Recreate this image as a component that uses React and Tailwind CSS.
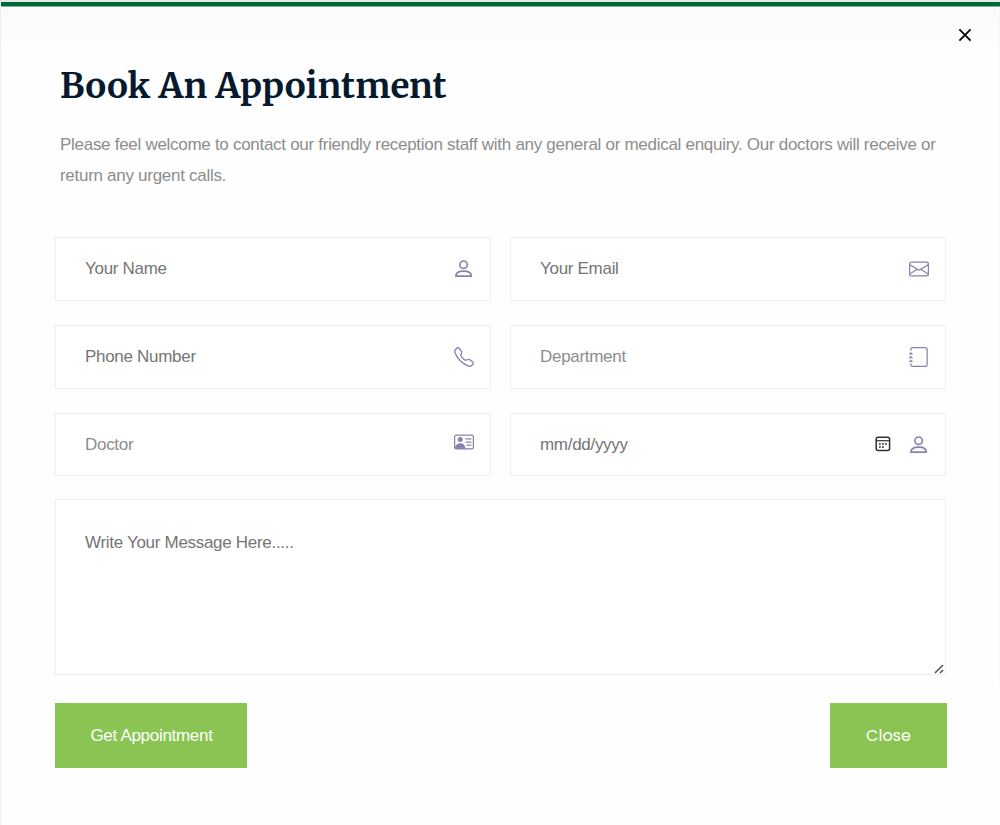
import { BsEnvelope, BsTelephone, BsJournal, BsPersonVcard } from "react-icons/bs";

const box = "border border-[#efefef] bg-white";

function Field({ label, muted, short, children }) {
  return (
    <label
      className={`flex items-center pl-[29px] pr-[16px] ${box} ${short ? "h-[63px]" : "h-[64px]"}`}
    >
      <input
        placeholder={label}
        className={`min-w-0 flex-1 bg-transparent text-[17px] tracking-[-0.3px] outline-none ${
          muted ? "placeholder:text-[#8d8d8d]" : "placeholder:text-[#757575]"
        }`}
      />
      {children}
    </label>
  );
}

function PersonIcon() {
  return (
    <svg
      className="mr-px h-[18px] w-[18px]"
      viewBox="0 0 18 18"
      fill="none"
      stroke="currentColor"
      strokeWidth="1.7"
      strokeLinejoin="round"
    >
      <circle cx="8.6" cy="4.7" r="3.7" />
      <path d="M.9 16.2C.9 12.9 4 11.1 8.6 11.1s7.7 1.8 7.7 5.1z" />
    </svg>
  );
}

function CalendarIcon() {
  return (
    <svg className="mr-[19px] mb-px h-4 w-4" viewBox="0 0 16 16" fill="none" stroke="#303030">
      <rect x="1.2" y="1.2" width="13.4" height="13.2" rx="2" strokeWidth="1.5" />
      <path d="M1.2 4.7h13.4" strokeWidth="1.2" />
      <path d="M4 8h8M4 11h5.2" strokeWidth="1.6" strokeDasharray="1.8 1.2" />
    </svg>
  );
}

export default function App() {
  return (
    <div className="relative flex h-[825px] w-[1000px] flex-col bg-[#fefefe] font-['Liberation_Sans',Arial,sans-serif]">
      <div className="h-[2px] shrink-0 bg-[#e6ebe9]" />
      <div className="ml-px h-[5px] shrink-0 border-b border-[#80b49d] bg-[#006838]" />
      <div className="absolute top-[7px] right-0 h-[678px] w-px bg-[#f6f6f6]" />
      <main className="flex flex-1 flex-col border-l border-[#efefef] bg-linear-to-b from-[#fafafa] to-[#fefefe] to-[48px] pl-[54px] pr-[53px]">
        <div className="-mr-[26px] flex h-[56px] justify-end pt-[20px]">
          <button aria-label="Dismiss" className="h-4 w-4">
            <svg viewBox="0 0 16 16" fill="none" stroke="#000" strokeWidth="1.8">
              <path d="M2.4 2.4 13.6 13.6M13.6 2.4 2.4 13.6" />
            </svg>
          </button>
        </div>
        <h1 className="mt-px ml-[5px] h-[44px] whitespace-nowrap font-['Merriweather','DejaVu_Serif_Condensed',serif] text-[35px] leading-[44px] font-bold text-[#061a2e]">
          Book An Appointment
        </h1>
        <p className="mt-[21px] ml-[5px] h-[62px] text-[17px] leading-[31px] tracking-[-0.287px] whitespace-nowrap text-[#8d8d8d]">
          Please feel welcome to contact our friendly reception staff with any general or medical enquiry. Our doctors will receive or
          <br />
          return any urgent calls.
        </p>
        <form className="mt-[46px]">
          <div className="grid grid-cols-[436px_436px] gap-x-[19px] gap-y-[24px] text-[#8585ad]">
            <Field label="Your Name">
              <PersonIcon />
            </Field>
            <Field label="Your Email">
              <BsEnvelope className="h-5 w-5" />
            </Field>
            <Field label="Phone Number">
              <BsTelephone className="h-5 w-5" />
            </Field>
            <Field label="Department" muted>
              <BsJournal className="h-5 w-5" />
            </Field>
            <Field label="Doctor" muted short>
              <BsPersonVcard className="mb-[5px] h-5 w-5" />
            </Field>
            <Field label="mm/dd/yyyy" short>
              <CalendarIcon />
              <PersonIcon />
            </Field>
          </div>
          <div className={`relative mt-[23px] h-[176px] w-[891px] ${box}`}>
            <textarea
              placeholder="Write Your Message Here....."
              className="block h-full w-full resize-none bg-transparent pt-[33px] pl-[29px] text-[17px] leading-5 tracking-[-0.3px] outline-none placeholder:text-[#757575]"
            />
            <svg
              className="absolute right-[1px] bottom-0 h-[10px] w-[10px]"
              viewBox="0 0 10 10"
              fill="none"
              stroke="#555"
              strokeWidth="1.6"
            >
              <path d="M1 9 9 1M6 9 9 6" />
            </svg>
          </div>
          <div className="mt-[28px] flex w-[892px] justify-between text-white">
            <button type="button" className="h-[65px] w-[192px] bg-[#8ac453] pl-px text-[17px] tracking-[-0.3px]">
              Get Appointment
            </button>
            <button
              type="button"
              className="h-[65px] w-[117px] bg-[#8ac453] font-['Poppins','Lato',sans-serif] text-[16px]"
            >
              Close
            </button>
          </div>
        </form>
      </main>
    </div>
  );
}
